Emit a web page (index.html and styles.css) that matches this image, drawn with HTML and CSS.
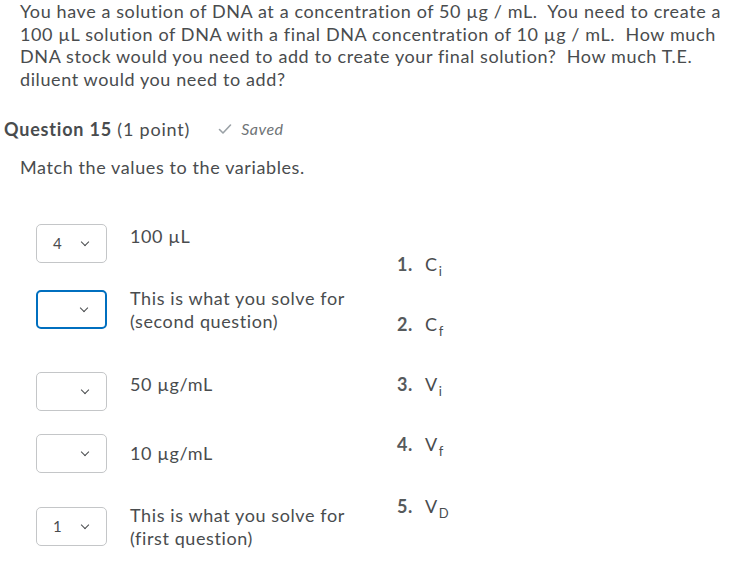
FILE: index.html
```html
<!DOCTYPE html>
<html lang="en">
<head>
  <meta charset="UTF-8">
  <title>Question 15</title>
  <link rel="stylesheet" href="styles.css">
</head>
<body>
  <p class="intro">You have a solution of DNA at a concentration of 50 µg / mL.&nbsp; You need to create a 100 µL solution of DNA with a final DNA concentration of 10 µg / mL.&nbsp; How much DNA stock would you need to add to create your final solution?&nbsp; How much T.E. diluent would you need to add?</p>

  <div class="q-head">
    <h3><b>Question 15</b> (1 point)</h3>
    <span class="saved">
      <svg width="14" height="12" viewBox="0 0 14 12"><path d="M1.5 6.5 L5 10 L12.5 2" fill="none" stroke="#9aa1a6" stroke-width="1.6" stroke-linecap="round" stroke-linejoin="round"/></svg>
      Saved
    </span>
  </div>

  <p class="prompt">Match the values to the variables.</p>

  <div class="match">
    <div class="choices">
      <div class="pair top r1">
        <div class="sel"><span>4</span><i class="chev"></i></div>
        <div class="label">100 µL</div>
      </div>
      <div class="pair r2">
        <div class="sel focus"><span></span><i class="chev"></i></div>
        <div class="label">This is what you solve for<br>(second question)</div>
      </div>
      <div class="pair top r3">
        <div class="sel"><span></span><i class="chev"></i></div>
        <div class="label">50 µg/mL</div>
      </div>
      <div class="pair r4">
        <div class="sel"><span></span><i class="chev"></i></div>
        <div class="label">10 µg/mL</div>
      </div>
      <div class="pair r5">
        <div class="sel"><span>1</span><i class="chev"></i></div>
        <div class="label">This is what you solve for<br>(first question)</div>
      </div>
    </div>

    <ol class="vars">
      <li><span class="num">1.</span>C<sub>i</sub></li>
      <li><span class="num">2.</span>C<sub>f</sub></li>
      <li><span class="num">3.</span>V<sub>i</sub></li>
      <li><span class="num">4.</span>V<sub>f</sub></li>
      <li><span class="num">5.</span>V<sub>D</sub></li>
    </ol>
  </div>
</body>
</html>
```

FILE: styles.css
```css
* { box-sizing: border-box; margin: 0; padding: 0; }
body {
  width: 730px;
  background: #fff;
  color: #494c4e;
  font-family: Lato, "Open Sans", sans-serif;
  font-size: 18px;
  line-height: 22.5px;
  letter-spacing: 0.6px;
  font-variant-ligatures: none;
}
.intro { padding: 0 4px 0 20px; }

.q-head { display: flex; align-items: center; gap: 28px; margin-top: 28px; padding-left: 4px; }
.q-head h3 { font-size: 18px; font-weight: normal; letter-spacing: 0.8px; }
.q-head h3 b { font-weight: bold; }
.saved { display: flex; align-items: center; gap: 9px; font-style: italic; font-size: 16px; color: #6e7376; letter-spacing: 0.5px; }

.prompt { margin-top: 15px; padding-left: 20px; }

.match { display: flex; padding-left: 36px; margin-top: 46px; }
.choices { width: 361px; }
.pair { display: flex; align-items: center; gap: 23px; }
.pair.top { align-items: flex-start; }
.pair.top .label { margin-top: 1px; }
.r1 { margin-top: 0; }
.r2 { margin-top: 24px; }
.r3 { margin-top: 40px; }
.r4 { margin-top: 23px; }
.r5 { margin-top: 31px; }

.sel {
  width: 71px; height: 39px;
  border: 1px solid #c4c6c8;
  border-radius: 5px;
  display: flex; align-items: center;
  padding: 0 0 0 16px;
  font-size: 15px;
  color: #494c4e;
  position: relative;
}
.sel.focus { border: 2px solid #006fbf; padding-left: 15px; }
.sel span { width: 24px; }
.chev {
  position: absolute; right: 18px; top: 50%;
  width: 6px; height: 6px; margin-top: -5px;
  border-right: 1.7px solid #494c4e;
  border-bottom: 1.7px solid #494c4e;
  transform: rotate(45deg);
}

.vars { list-style: none; margin-top: 29px; }
.vars li { height: 60px; font-size: 18px; }
.vars li:last-child { margin-top: 2px; }
.num { display: inline-block; width: 28px; font-weight: bold; color: #565a5c; }
.vars sub { font-size: 13px; vertical-align: -5px; line-height: 0; margin-left: 1px; }
```
